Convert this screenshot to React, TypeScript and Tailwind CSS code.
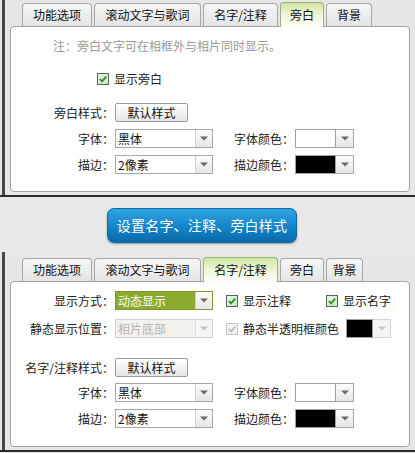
import React from "react";

type TabDef = { t: string; cls: string };

function Tabs({ tabs, active }: { tabs: TabDef[]; active: string }) {
  return (
    <div className="flex items-end gap-[2px] pl-[17px] h-[24px] relative z-10">
      {tabs.map((tab) =>
        tab.t === active ? (
          <div
            key={tab.t}
            className={`${tab.cls} h-[25px] -mb-px flex items-center justify-center rounded-t-[4px] border border-b-0 border-[#9fae84] bg-linear-to-b from-[#cfe69c] via-[#eef6dc] to-[#fbfdf6] text-[#111]`}
          >
            {tab.t}
          </div>
        ) : (
          <div
            key={tab.t}
            className={`${tab.cls} h-[23px] flex items-center justify-center rounded-t-[4px] border border-b-0 border-[#a8a8a8] bg-linear-to-b from-[#f6f6f6] to-[#e4e4e4] text-[#111]`}
          >
            {tab.t}
          </div>
        )
      )}
    </div>
  );
}

function Arrow({ color = "#666" }: { color?: string }) {
  return (
    <svg width="8" height="5" viewBox="0 0 8 5">
      <path d="M0 0.5 L8 0.5 L4 4.5 Z" fill={color} />
    </svg>
  );
}

function Select({
  text,
  variant = "normal",
}: {
  text: string;
  variant?: "normal" | "green" | "disabled";
}) {
  const box =
    variant === "green"
      ? "border-[#7d9631] bg-[#8cab30] text-white"
      : variant === "disabled"
      ? "border-[#cfcfcf] bg-[#f2f1ec] text-[#b4b4b4]"
      : "border-[#a7a7a7] bg-white text-[#111]";
  return (
    <div className={`flex h-[19px] w-[98px] border ${box}`}>
      <div className="flex-1 flex items-center pl-[2px] leading-none">{text}</div>
      <div
        className={`w-[17px] flex items-center justify-center border-l ${
          variant === "disabled"
            ? "border-[#dedede] bg-[#f5f5f5]"
            : "border-[#cfcfcf] bg-linear-to-b from-[#fbfbfb] to-[#e7e7e7]"
        }`}
      >
        <Arrow color={variant === "disabled" ? "#c4c4c4" : "#6a6a6a"} />
      </div>
    </div>
  );
}

function ColorBox({
  swatch,
  small = false,
  disabled = false,
}: {
  swatch: "white" | "black";
  small?: boolean;
  disabled?: boolean;
}) {
  return (
    <div className="flex h-[19px]">
      <div
        className={`${small ? "w-[27px]" : "w-[41px]"} h-full border border-[#a0a0a0] ${
          swatch === "black" ? "bg-black" : "bg-white"
        }`}
      />
      <div
        className={`w-[18px] h-full border border-l-0 flex items-center justify-center ${
          disabled
            ? "border-[#d4d4d4] bg-[#f4f4f4]"
            : "border-[#a8a8a8] bg-linear-to-b from-[#fbfbfb] to-[#e6e6e6]"
        }`}
      >
        <Arrow color={disabled ? "#c6c6c6" : "#6a6a6a"} />
      </div>
    </div>
  );
}

function Check({ disabled = false }: { disabled?: boolean }) {
  return (
    <svg width="12" height="12" viewBox="0 0 12 12" className="shrink-0">
      <defs>
        <linearGradient id={disabled ? "cbd" : "cbg"} x1="0" y1="0" x2="1" y2="1">
          <stop offset="0" stopColor={disabled ? "#f7f7f7" : "#eaf5e4"} />
          <stop offset="1" stopColor={disabled ? "#ececec" : "#cfe5c6"} />
        </linearGradient>
      </defs>
      <rect
        x="0.5"
        y="0.5"
        width="11"
        height="11"
        fill={`url(#${disabled ? "cbd" : "cbg"})`}
        stroke={disabled ? "#c4c4c4" : "#4e6a4e"}
      />
      <path
        d="M2.8 6 L5 8.3 L9.2 3.6"
        fill="none"
        stroke={disabled ? "#bdbdbd" : "#2c8a2c"}
        strokeWidth="1.8"
      />
    </svg>
  );
}

function CheckLabel({ text, disabled = false }: { text: string; disabled?: boolean }) {
  return (
    <div className="flex items-center gap-[5px]">
      <Check disabled={disabled} />
      <span className="leading-none">{text}</span>
    </div>
  );
}

function Label({ text }: { text: string }) {
  return <div className="w-[103px] text-right leading-none shrink-0">{text}</div>;
}

function Label2({ text }: { text: string }) {
  return <div className="w-[81px] text-right leading-none shrink-0">{text}</div>;
}

function DefaultButton() {
  return (
    <div className="ml-[1px] w-[73px] h-[19px] flex items-center justify-center border border-[#9c9c9c] rounded-[2px] bg-linear-to-b from-[#ffffff] to-[#e6e6e6] leading-none text-[#111]">
      默认样式
    </div>
  );
}

function FontRows({ first }: { first: string }) {
  return (
    <>
      <div className={`flex items-center ${first}`}>
        <Label text="字体：" />
        <div className="ml-[1px]">
          <Select text="黑体" />
        </div>
        <Label2 text="字体颜色：" />
        <div className="ml-[1px]">
          <ColorBox swatch="white" />
        </div>
      </div>
      <div className="flex items-center mt-[7px]">
        <Label text="描边：" />
        <div className="ml-[1px]">
          <Select text="2像素" />
        </div>
        <Label2 text="描边颜色：" />
        <div className="ml-[1px]">
          <ColorBox swatch="black" />
        </div>
      </div>
    </>
  );
}

const topTabs: TabDef[] = [
  { t: "功能选项", cls: "w-[70px]" },
  { t: "滚动文字与歌词", cls: "w-[107px]" },
  { t: "名字/注释", cls: "w-[75px]" },
  { t: "旁白", cls: "w-[44px]" },
  { t: "背景", cls: "w-[46px]" },
];

const bottomTabs: TabDef[] = [
  { t: "功能选项", cls: "w-[70px]" },
  { t: "滚动文字与歌词", cls: "w-[107px]" },
  { t: "名字/注释", cls: "w-[75px]" },
  { t: "旁白", cls: "w-[44px]" },
  { t: "背景", cls: "w-[37px]" },
];

export default function App() {
  return (
    <div className="w-[415px] h-[453px] overflow-hidden bg-[#e6e6e6] font-['Noto_Sans_CJK_SC','Noto_Sans',sans-serif] text-[12px] text-[#222]">
      {/* top screenshot */}
      <div className="ml-[2px] h-[195px] border-l-[3px] border-[#474747] pt-[2px]">
        <Tabs tabs={topTabs} active="旁白" />
        <div className="ml-[5px] w-[400px] h-[166px] bg-white border border-[#a3a3a3] rounded-[4px] pt-[11px]">
          <div className="pl-[42px] leading-[16px] text-[#9a9a9a]">
            注：旁白文字可在相框外与相片同时显示。
          </div>
          <div className="pl-[86px] mt-[19px]">
            <CheckLabel text="显示旁白" />
          </div>
          <div className="flex items-center mt-[18px]">
            <Label text="旁白样式：" />
            <DefaultButton />
          </div>
          <FontRows first="mt-[7px]" />
        </div>
      </div>
      <div className="h-[2px] bg-[#2a2a2a]" />

      {/* middle banner */}
      <div className="h-[55px] bg-[#e8e8e8] pt-[11px] pl-[107px]">
        <div className="w-[190px] h-[35px] rounded-[7px] border border-[#0d6aa4] bg-linear-to-b from-[#2fa3e1] via-[#1488cc] to-[#0a6aaa] shadow-[0_1px_2px_rgba(0,0,0,0.35)] flex items-center justify-center text-white text-[14px] tracking-[0.2px]">
          设置名字、注释、旁白样式
        </div>
      </div>

      {/* bottom screenshot */}
      <div className="ml-[2px] h-[198px] border-l-[3px] border-[#474747] pt-[5px]">
        <Tabs tabs={bottomTabs} active="名字/注释" />
        <div className="ml-[5px] w-[400px] h-[166px] bg-white border border-[#a3a3a3] rounded-[4px] pt-[9px]">
          <div className="flex items-center">
            <Label text="显示方式：" />
            <div className="ml-[1px]">
              <Select text="动态显示" variant="green" />
            </div>
            <div className="ml-[13px] w-[100px]">
              <CheckLabel text="显示注释" />
            </div>
            <CheckLabel text="显示名字" />
          </div>
          <div className="flex items-center mt-[9px]">
            <Label text="静态显示位置：" />
            <div className="ml-[1px]">
              <Select text="相片底部" variant="disabled" />
            </div>
            <div className="ml-[13px]">
              <CheckLabel text="静态半透明框颜色" disabled />
            </div>
            <div className="ml-[7px]">
              <ColorBox swatch="black" small disabled />
            </div>
          </div>
          <div className="flex items-center mt-[20px]">
            <Label text="名字/注释样式：" />
            <DefaultButton />
          </div>
          <FontRows first="mt-[6px]" />
        </div>
      </div>
      <div className="h-[2px] bg-[#2a2a2a]" />
    </div>
  );
}
